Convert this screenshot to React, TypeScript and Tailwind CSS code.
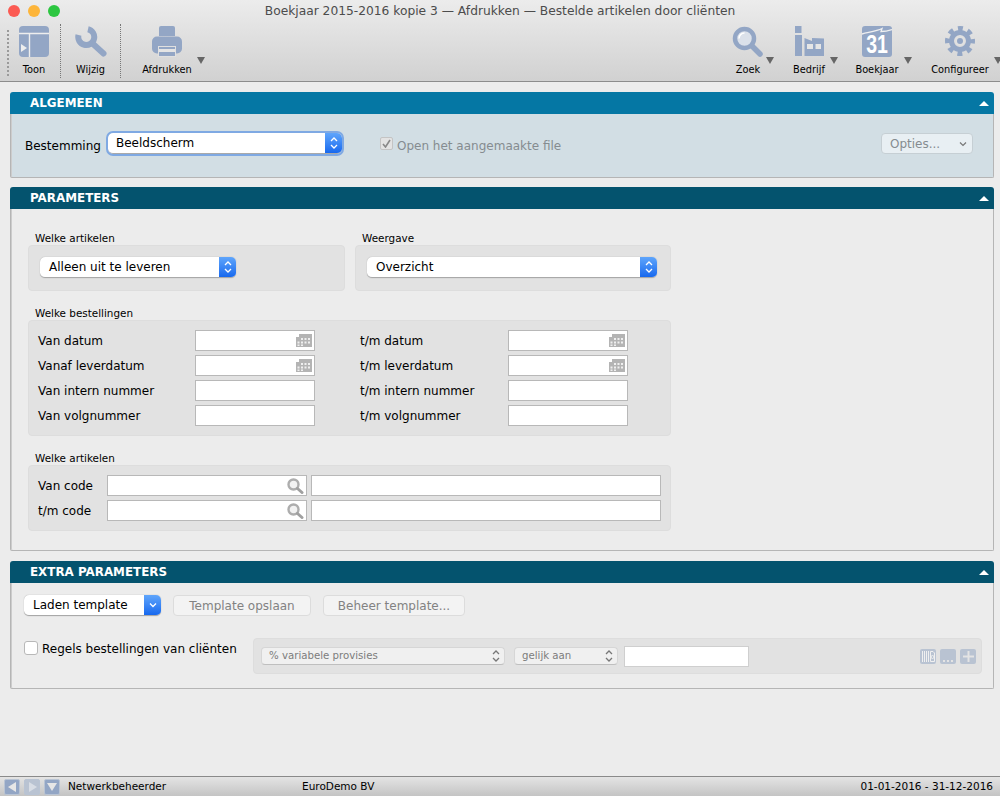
import type { ReactNode } from "react";

const ICON = "#93a6c5";

const ToonIcon = () => (
  <svg width="30" height="31" viewBox="0 0 30 31">
    <rect width="30" height="31" rx="4" fill={ICON} />
    <path d="M0 7.5H30M10.5 7.5V31" stroke="#eeeeee" strokeWidth="1.4" />
    <path d="M2 18L8 22L2 26Z" fill="#eeeeee" />
  </svg>
);

const WrenchIcon = () => (
  <svg width="32" height="31" viewBox="0 0 32 31">
    <path d="M3.5 9A8 8 0 1 0 13 3.2" fill="none" stroke={ICON} strokeWidth="6" />
    <path d="M17 17L28.5 27.5" stroke={ICON} strokeWidth="6" strokeLinecap="round" />
  </svg>
);

const PrinterIcon = () => (
  <svg width="30" height="31" viewBox="0 0 30 31">
    <path d="M7 10V2a2 2 0 0 1 2-2h12a2 2 0 0 1 2 2v8Z" fill={ICON} />
    <rect y="10.5" width="30" height="17" rx="5" fill={ICON} />
    <rect x="6.5" y="20.5" width="17" height="10" fill={ICON} stroke="#e0e0e0" strokeWidth="1" />
    <rect x="7" y="23" width="16" height="3" fill="#e4e4e4" />
  </svg>
);

const SearchIcon = () => (
  <svg width="32" height="31" viewBox="0 0 32 31">
    <circle cx="12.5" cy="12.5" r="9.5" fill="#dbe1ea" stroke={ICON} strokeWidth="4.5" />
    <path d="M7 12.500a5.500 5.500 0 0 1 5.500-5.500" fill="none" stroke="#ffffff" strokeWidth="1.5" />
    <path d="M20 20L28 28" stroke={ICON} strokeWidth="5.500" strokeLinecap="round" />
  </svg>
);

const FactoryIcon = () => (
  <svg width="31" height="31" viewBox="0 0 31 31">
    <rect x="1" width="6.5" height="7" fill={ICON} />
    <rect x="1" y="9" width="7" height="21" fill={ICON} />
    <path d="M10.500 30V12L18 15V12L30 12.500V30Z" fill={ICON} />
    <rect x="13" y="18" width="6" height="5" fill="#e6e6e6" />
    <rect x="21.500" y="18" width="5.500" height="5" fill="#e6e6e6" />
  </svg>
);

const CalendarIcon = () => (
  <div className="relative w-[30px] h-[31px]">
    <svg width="30" height="31" viewBox="0 0 30 31">
      <rect width="30" height="31" rx="3" fill={ICON} />
      <path d="M0 8C8 6 15 5 20 2.500L19 5.500C23 5.500 27 4.500 30 3.500" fill="none" stroke="#f0f0f0" strokeWidth="1.300" />
    </svg>
    <span className="absolute left-0 w-[30px] text-center top-[6px] text-[26px] leading-[24px] font-bold text-white scale-x-75 font-['Liberation_Sans',sans-serif]">
      31
    </span>
  </div>
);

const GearIcon = () => (
  <svg width="30" height="30" viewBox="0 0 30 30">
    <circle cx="15" cy="15" r="12.5" fill="none" stroke={ICON} strokeWidth="5" strokeDasharray="4.9 4.92" strokeDashoffset="2.45" />
    <circle cx="15" cy="15" r="8.5" fill="none" stroke={ICON} strokeWidth="5" />
    <circle cx="15" cy="15" r="5" fill="#e1e1e1" />
    <circle cx="15" cy="15" r="3" fill={ICON} />
  </svg>
);

const ToolItem = ({
  label,
  width,
  arrowLeft,
  children,
}: {
  label: string;
  width: string;
  arrowLeft?: string;
  children: ReactNode;
}) => (
  <div className={`relative shrink-0 flex flex-col items-center pt-[4px] ${width}`}>
    <div className="h-[32px] flex items-start justify-center">{children}</div>
    <span className="mt-[5px] text-[9.8px] leading-[14px] text-black whitespace-nowrap">{label}</span>
    {arrowLeft && (
      <span
        className={`absolute top-[35px] w-0 h-0 border-l-[4px] border-r-[4px] border-t-[7px] border-l-transparent border-r-transparent border-t-[#666666] ${arrowLeft}`}
      />
    )}
  </div>
);

const Chevrons = ({ color = "#ffffff" }: { color?: string }) => (
  <svg width="8" height="14" viewBox="0 0 8 14">
    <path d="M1 5L4 2L7 5M1 9L4 12L7 9" fill="none" stroke={color} strokeWidth="1.3" />
  </svg>
);

const BlueSelect = ({
  text,
  width,
  focused,
  single,
}: {
  text: string;
  width: string;
  focused?: boolean;
  single?: boolean;
}) => (
  <div
    className={`${width} h-[21px] flex bg-white rounded-[5px] overflow-hidden text-[12px] leading-[21px] text-black border-b border-[#a9a9a9] ${
      focused ? "outline outline-[2px] outline-[#7fa9e3]" : "shadow-[0_0_1px_#999999]"
    }`}
  >
    <span className={`flex-1 whitespace-nowrap ${focused ? "pl-[8px]" : "pl-[9px]"}`}>{text}</span>
    <span className="w-[17px] flex items-center justify-center bg-gradient-to-b from-[#5fa5fb] to-[#1668ee]">
      {single ? (
        <svg width="8" height="6" viewBox="0 0 8 6">
          <path d="M1 1.5L4 4.5L7 1.5" fill="none" stroke="#ffffff" strokeWidth="1.3" />
        </svg>
      ) : (
        <Chevrons />
      )}
    </span>
  </div>
);

const DisabledSelect = ({ text, width }: { text: string; width: string }) => (
  <div
    className={`${width} h-[18px] flex items-center justify-between pl-[7px] pr-[4px] bg-[#f0f0f0] rounded-[4px] border border-[#d6d6d6] border-b-[#bfbfbf] text-[10.2px] text-[#7c7c7c] whitespace-nowrap`}
  >
    <span>{text}</span>
    <Chevrons color="#777777" />
  </div>
);

const GhostButton = ({ text, width }: { text: string; width: string }) => (
  <div
    className={`${width} h-[21px] flex items-center justify-center bg-[#f3f3f3] rounded-[4px] border border-[#dcdcdc] text-[12px] text-[#828282]`}
  >
    {text}
  </div>
);

const MiniCalendar = () => (
  <svg width="16" height="13" viewBox="0 0 16 13" className="absolute right-[2px] top-[3px]">
    <path d="M0 3h3V0h13v13H0Z" fill="#b4b4b4" />
    <path d="M5 4h2v2H5ZM8.500 4h2v2h-2ZM12 4h2v2h-2ZM1.500 7.500h2v2h-2ZM5 7.500h2v2H5ZM8.500 7.500h2v2h-2ZM12 7.500h2v2h-2ZM1.500 10.500h2v1.500h-2ZM5 10.500h2v1.500H5Z" fill="#efefef" />
  </svg>
);

const MiniSearch = () => (
  <svg width="17" height="16" viewBox="0 0 17 16" className="absolute right-[2px] top-[2px]">
    <circle cx="6.500" cy="6.500" r="5" fill="#f2f2f2" stroke="#adadad" strokeWidth="2.400" />
    <path d="M10.500 10.500L15 14.500" stroke="#a0a0a0" strokeWidth="3" strokeLinecap="round" />
  </svg>
);

const Field = ({ width, children }: { width: string; children?: ReactNode }) => (
  <div className={`relative ${width} h-[21px] bg-white border border-[#b8b8b8]`}>{children}</div>
);

const RowLabel = ({ children }: { children: ReactNode }) => (
  <span className="h-[21px] leading-[23px] text-black">{children}</span>
);

const Section = ({
  title,
  header,
  body,
  children,
}: {
  title: string;
  header: string;
  body: string;
  children: ReactNode;
}) => (
  <section>
    <div className={`h-[22px] flex items-center justify-between pl-[20px] pr-[5px] rounded-t-[3px] ${header}`}>
      <span className="pt-[2px] text-[11.9px] font-bold text-white">{title}</span>
      <span className="w-0 h-0 border-l-[5px] border-r-[5px] border-b-[5px] border-l-transparent border-r-transparent border-b-white" />
    </div>
    <div className={`border-x border-b border-[#b5b5b5] rounded-b-[2px] shadow-[inset_1px_0_0_#cccccc] ${body}`}>{children}</div>
  </section>
);

const Group = ({ label, className, children }: { label: string; className: string; children: ReactNode }) => (
  <div className={className}>
    <div className="h-[14px] pl-[7px] text-[10.4px] leading-[14px] text-black">{label}</div>
    <div className="bg-[#e2e2e2] border border-[#dddddd] rounded-[4px]">{children}</div>
  </div>
);

const orderRows = [
  ["Van datum", "t/m datum", true],
  ["Vanaf leverdatum", "t/m leverdatum", true],
  ["Van intern nummer", "t/m intern nummer", false],
  ["Van volgnummer", "t/m volgnummer", false],
] as const;

const StatusButton = ({ children, dim }: { children: ReactNode; dim?: boolean }) => (
  <span
    className={`w-[16px] h-[16px] flex items-center justify-center rounded-[2px] border border-[#b9c4d4] ${
      dim ? "bg-[#b9c3d2]" : "bg-[#93a6c5]"
    }`}
  >
    {children}
  </span>
);

export default function App() {
  return (
    <div className="w-[1000px] h-[796px] flex flex-col overflow-hidden bg-[#ececec] text-[12px] font-['DejaVu_Sans',sans-serif]">
      <header className="h-[82px] shrink-0 border-b border-[#8c8c8c] bg-gradient-to-b from-[#ececec] to-[#d1d1d1]">
        <div className="relative h-[22px] flex items-center justify-center text-[12.25px] text-[#4c4c4c]">
          <div className="absolute left-[8px] top-[5px] flex gap-[8px]">
            <span className="w-[12px] h-[12px] rounded-full bg-[#fb5a52]" />
            <span className="w-[12px] h-[12px] rounded-full bg-[#fdb53a]" />
            <span className="w-[12px] h-[12px] rounded-full bg-[#2cc640]" />
          </div>
          Boekjaar 2015-2016 kopie 3 — Afdrukken — Bestelde artikelen door cliënten
        </div>
        <div className="h-[59px] flex">
          <div className="flex flex-1">
            <span className="ml-[7px] mt-[8px] h-[46px] border-l-2 border-dotted border-[#9a9a9a]" />
            <ToolItem label="Toon" width="w-[50px]">
              <ToonIcon />
            </ToolItem>
            <span className="ml-[1px] mt-[2px] h-[54px] border-l border-dotted border-[#777777]" />
            <ToolItem label="Wijzig" width="w-[59px]">
              <WrenchIcon />
            </ToolItem>
            <span className="mt-[2px] h-[54px] border-l border-dotted border-[#777777]" />
            <ToolItem label="Afdrukken" width="w-[92px]" arrowLeft="left-[76px]">
              <PrinterIcon />
            </ToolItem>
          </div>
          <div className="w-[282px] flex overflow-hidden">
            <ToolItem label="Zoek" width="w-[60px]" arrowLeft="left-[48px]">
              <SearchIcon />
            </ToolItem>
            <ToolItem label="Bedrijf" width="w-[62px]" arrowLeft="left-[52px]">
              <FactoryIcon />
            </ToolItem>
            <ToolItem label="Boekjaar" width="w-[74px]" arrowLeft="left-[64px]">
              <CalendarIcon />
            </ToolItem>
            <ToolItem label="Configureer" width="w-[92px]" arrowLeft="left-[80px]">
              <GearIcon />
            </ToolItem>
          </div>
        </div>
      </header>

      <main className="flex-1 flex flex-col pt-[10px] pl-[10px] pr-[6px]">
        <Section title="ALGEMEEN" header="bg-[#0577a4]" body="h-[64px] bg-[#d2dee4] pl-[14px] pr-[20px] pt-[19px]">
          <div className="flex items-start">
            <span className="w-[83px] pt-[4px] text-black">Bestemming</span>
            <BlueSelect text="Beeldscherm" width="w-[234px]" focused />
            <span className="ml-[38px] mt-[4px] w-[13px] h-[13px] flex items-center justify-center bg-[#e3e3e3] border border-[#c4c4c4] rounded-[2px]">
              <svg width="9" height="9" viewBox="0 0 9 9">
                <path d="M1 5L3.500 8L8 1" fill="none" stroke="#888888" strokeWidth="1.600" />
              </svg>
            </span>
            <span className="ml-[4px] pt-[4px] text-[#858c90]">Open het aangemaakte file</span>
            <div className="ml-auto w-[92px] h-[21px] flex items-center justify-between pl-[8px] pr-[5px] bg-[#e8eff3] border border-[#c6cfd4] rounded-[4px] text-[#858c90]">
              <span>Opties...</span>
              <svg width="8" height="6" viewBox="0 0 8 6">
                <path d="M1 1.500L4 4.500L7 1.500" fill="none" stroke="#777777" strokeWidth="1.200" />
              </svg>
            </div>
          </div>
        </Section>

        <div className="mt-[9px]">
          <Section title="PARAMETERS" header="bg-[#04536e]" body="h-[342px] bg-[#ececec] pl-[17px] pt-[22px]">
            <div className="w-[643px] flex flex-col gap-[15px]">
              <div className="flex gap-[10px]">
                <Group label="Welke artikelen" className="w-[317px]">
                  <div className="h-[44px] pl-[11px] pt-[11px]">
                    <BlueSelect text="Alleen uit te leveren" width="w-[196px]" />
                  </div>
                </Group>
                <Group label="Weergave" className="w-[316px]">
                  <div className="h-[44px] pl-[11px] pt-[11px]">
                    <BlueSelect text="Overzicht" width="w-[290px]" />
                  </div>
                </Group>
              </div>
              <Group label="Welke bestellingen" className="w-full">
                <div className="grid grid-cols-[157px_165px_148px_120px] gap-y-[4px] pl-[9px] pt-[9px] pb-[9px]">
                  {orderRows.map(([left, right, hasDate]) => (
                    <div key={left} className="contents">
                      <RowLabel>{left}</RowLabel>
                      <Field width="w-[120px]">{hasDate && <MiniCalendar />}</Field>
                      <RowLabel>{right}</RowLabel>
                      <Field width="w-[120px]">{hasDate && <MiniCalendar />}</Field>
                    </div>
                  ))}
                </div>
              </Group>
              <Group label="Welke artikelen" className="w-full">
                <div className="grid grid-cols-[65px_200px_350px] gap-x-[4px] gap-y-[4px] pl-[9px] pt-[9px] pb-[9px]">
                  <RowLabel>Van code</RowLabel>
                  <Field width="w-[200px]">
                    <MiniSearch />
                  </Field>
                  <Field width="w-[350px]" />
                  <RowLabel>t/m code</RowLabel>
                  <Field width="w-[200px]">
                    <MiniSearch />
                  </Field>
                  <Field width="w-[350px]" />
                </div>
              </Group>
            </div>
          </Section>
        </div>

        <div className="mt-[10px]">
          <Section title="EXTRA PARAMETERS" header="bg-[#04536e]" body="h-[106px] bg-[#ececec] pl-[13px] pr-[11px] pt-[12px]">
            <div className="flex gap-[12px]">
              <BlueSelect text="Laden template" width="w-[137px]" single />
              <GhostButton text="Template opslaan" width="w-[138px]" />
              <GhostButton text="Beheer template..." width="w-[142px]" />
            </div>
            <div className="mt-[22px] flex items-start">
              <span className="mt-[3px] w-[14px] h-[14px] bg-white border border-[#b8b8b8] rounded-[3px]" />
              <span className="ml-[4px] w-[211px] pt-[2px] text-black whitespace-nowrap">Regels bestellingen van cliënten</span>
              <div className="flex-1 h-[36px] flex items-center pl-[7px] pr-[5px] bg-[#e2e2e2] border border-[#dddddd] rounded-[4px]">
                <DisabledSelect text="% variabele provisies" width="w-[244px]" />
                <span className="w-[9px]" />
                <DisabledSelect text="gelijk aan" width="w-[104px]" />
                <div className="ml-[6px] w-[125px] h-[21px] bg-white border border-[#cfcfcf]" />
                <div className="ml-auto flex gap-[4px]">
                  <span className="w-[16px] h-[15px] flex items-center justify-center rounded-[2px] bg-[#b9c3d2]">
                    <svg width="13" height="11" viewBox="0 0 13 11">
                      <path d="M.5 0V11M2.500 0V11M4.500 0V11M6.500 0V11" stroke="#f0f0f0" strokeWidth="1" />
                      <path d="M8.500 .5H11L12.500 2V10.500H8.500Z" fill="none" stroke="#f0f0f0" />
                      <circle cx="10.500" cy="6" r="1.500" fill="none" stroke="#f0f0f0" />
                    </svg>
                  </span>
                  <span className="w-[16px] h-[15px] flex items-end justify-center rounded-[2px] bg-[#b9c3d2] pb-[2px]">
                    <svg width="10" height="2" viewBox="0 0 10 2">
                      <path d="M0 0h2v2H0ZM4 0h2v2H4ZM8 0h2v2H8Z" fill="#e4e4e4" />
                    </svg>
                  </span>
                  <span className="w-[16px] h-[15px] flex items-center justify-center rounded-[2px] bg-[#b9c3d2]">
                    <svg width="11" height="11" viewBox="0 0 11 11">
                      <path d="M5.500 0V11M0 5.500H11" stroke="#e4e4e4" strokeWidth="2" />
                    </svg>
                  </span>
                </div>
              </div>
            </div>
          </Section>
        </div>
      </main>

      <footer className="h-[20px] shrink-0 flex items-center border-t border-[#8a8a8a] bg-gradient-to-b from-[#e4e4e4] to-[#c4c4c4] pl-[4px] pr-[7px] text-[10.5px] text-black">
        <div className="flex gap-[4px]">
          <StatusButton>
            <svg width="9" height="10" viewBox="0 0 9 10"><path d="M8 0V10L0 5Z" fill="#e6e6e6" /></svg>
          </StatusButton>
          <StatusButton dim>
            <svg width="9" height="10" viewBox="0 0 9 10"><path d="M1 0V10L9 5Z" fill="#d8dde5" /></svg>
          </StatusButton>
          <StatusButton>
            <svg width="10" height="9" viewBox="0 0 10 9"><path d="M0 1H10L5 9Z" fill="#e6e6e6" /></svg>
          </StatusButton>
        </div>
        <span className="ml-[8px] w-[234px]">Netwerkbeheerder</span>
        <span>EuroDemo BV</span>
        <span className="ml-auto">01-01-2016 - 31-12-2016</span>
      </footer>
    </div>
  );
}
